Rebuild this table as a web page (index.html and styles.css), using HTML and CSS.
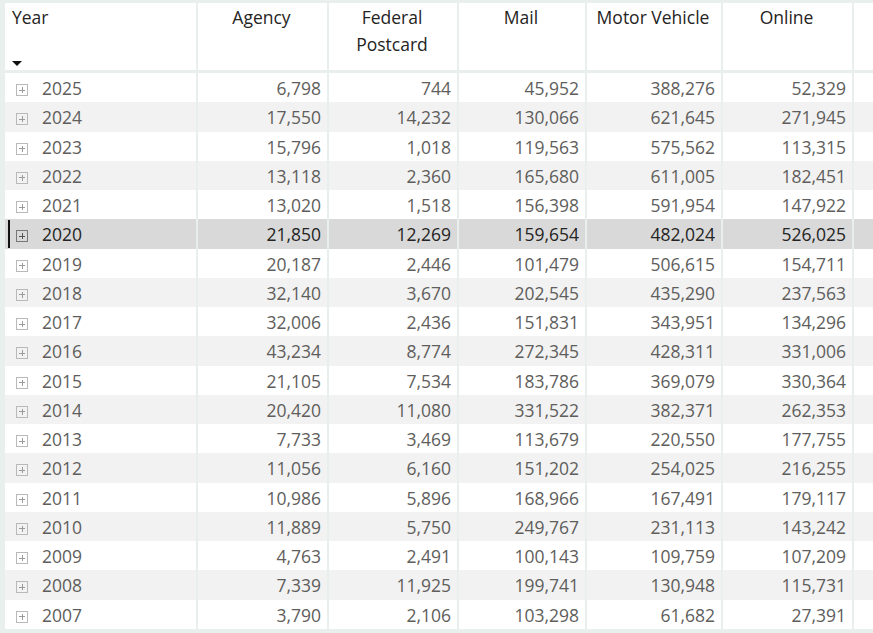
FILE: index.html
```html
<!DOCTYPE html>
<html>
<head>
<meta charset="utf-8">
<link rel="stylesheet" href="styles.css">
</head>
<body>
<div class="frame">
<table class="matrix">
<colgroup>
<col class="c-year"><col class="c-agency"><col class="c-fed"><col class="c-mail"><col class="c-motor"><col class="c-online"><col class="c-rest">
</colgroup>
<thead>
<tr>
<th class="h-year"><div class="h-year-inner"><span>Year</span><span class="sort"></span></div></th>
<th>Agency</th>
<th>Federal<br>Postcard</th>
<th>Mail</th>
<th>Motor Vehicle</th>
<th>Online</th>
<th class="rest"></th>
</tr>
</thead>
<tbody>
<tr><td class="year"><span class="exp"></span>2025</td><td>6,798</td><td>744</td><td>45,952</td><td>388,276</td><td>52,329</td><td class="rest"></td></tr>
<tr><td class="year"><span class="exp"></span>2024</td><td>17,550</td><td>14,232</td><td>130,066</td><td>621,645</td><td>271,945</td><td class="rest"></td></tr>
<tr><td class="year"><span class="exp"></span>2023</td><td>15,796</td><td>1,018</td><td>119,563</td><td>575,562</td><td>113,315</td><td class="rest"></td></tr>
<tr><td class="year"><span class="exp"></span>2022</td><td>13,118</td><td>2,360</td><td>165,680</td><td>611,005</td><td>182,451</td><td class="rest"></td></tr>
<tr><td class="year"><span class="exp"></span>2021</td><td>13,020</td><td>1,518</td><td>156,398</td><td>591,954</td><td>147,922</td><td class="rest"></td></tr>
<tr class="sel"><td class="year"><span class="bar"></span><span class="exp"></span>2020</td><td>21,850</td><td>12,269</td><td>159,654</td><td>482,024</td><td>526,025</td><td class="rest"></td></tr>
<tr><td class="year"><span class="exp"></span>2019</td><td>20,187</td><td>2,446</td><td>101,479</td><td>506,615</td><td>154,711</td><td class="rest"></td></tr>
<tr><td class="year"><span class="exp"></span>2018</td><td>32,140</td><td>3,670</td><td>202,545</td><td>435,290</td><td>237,563</td><td class="rest"></td></tr>
<tr><td class="year"><span class="exp"></span>2017</td><td>32,006</td><td>2,436</td><td>151,831</td><td>343,951</td><td>134,296</td><td class="rest"></td></tr>
<tr><td class="year"><span class="exp"></span>2016</td><td>43,234</td><td>8,774</td><td>272,345</td><td>428,311</td><td>331,006</td><td class="rest"></td></tr>
<tr><td class="year"><span class="exp"></span>2015</td><td>21,105</td><td>7,534</td><td>183,786</td><td>369,079</td><td>330,364</td><td class="rest"></td></tr>
<tr><td class="year"><span class="exp"></span>2014</td><td>20,420</td><td>11,080</td><td>331,522</td><td>382,371</td><td>262,353</td><td class="rest"></td></tr>
<tr><td class="year"><span class="exp"></span>2013</td><td>7,733</td><td>3,469</td><td>113,679</td><td>220,550</td><td>177,755</td><td class="rest"></td></tr>
<tr><td class="year"><span class="exp"></span>2012</td><td>11,056</td><td>6,160</td><td>151,202</td><td>254,025</td><td>216,255</td><td class="rest"></td></tr>
<tr><td class="year"><span class="exp"></span>2011</td><td>10,986</td><td>5,896</td><td>168,966</td><td>167,491</td><td>179,117</td><td class="rest"></td></tr>
<tr><td class="year"><span class="exp"></span>2010</td><td>11,889</td><td>5,750</td><td>249,767</td><td>231,113</td><td>143,242</td><td class="rest"></td></tr>
<tr><td class="year"><span class="exp"></span>2009</td><td>4,763</td><td>2,491</td><td>100,143</td><td>109,759</td><td>107,209</td><td class="rest"></td></tr>
<tr><td class="year"><span class="exp"></span>2008</td><td>7,339</td><td>11,925</td><td>199,741</td><td>130,948</td><td>115,731</td><td class="rest"></td></tr>
<tr><td class="year"><span class="exp"></span>2007</td><td>3,790</td><td>2,106</td><td>103,298</td><td>61,682</td><td>27,391</td><td class="rest"></td></tr>
</tbody>
</table>
</div>
</body>
</html>
```
FILE: styles.css
```css
html, body {
  margin: 0;
  padding: 0;
  background: #e9efec;
  overflow: hidden;
}
.frame {
  padding: 3px 0 0 5px;
  width: 868px;
  overflow: hidden;
}
.matrix {
  border-collapse: separate;
  border-spacing: 0;
  table-layout: fixed;
  width: 868px;
  font-family: "Open Sans", "Noto Sans", sans-serif;
  font-size: 17.5px;
  color: #605e5c;
  background: #fff;
}
.c-year { width: 193px; }
.c-agency { width: 131px; }
.c-fed { width: 130px; }
.c-mail { width: 128px; }
.c-motor { width: 136px; }
.c-online { width: 131px; }
.c-rest { width: 19px; }
.matrix th, .matrix td {
  border-right: 2px solid #e9efec;
  padding: 0 6px 0 0;
  white-space: nowrap;
  overflow: hidden;
}
.matrix th.rest, .matrix td.rest {
  border-right: 0;
  padding: 0;
}
.matrix th {
  height: 66px;
  border-bottom: 3px solid #e9efec;
  vertical-align: top;
  font-weight: normal;
  color: #252423;
  text-align: center;
  line-height: 27px;
  padding: 1px 2px 0 0;
  box-sizing: content-box;
}
.matrix th.h-year {
  text-align: left;
  padding: 1px 0 0 7px;
}
.h-year-inner {
  display: flex;
  flex-direction: column;
  height: 66px;
  justify-content: space-between;
  box-sizing: border-box;
}
.sort {
  width: 0;
  height: 0;
  border-left: 5px solid transparent;
  border-right: 5px solid transparent;
  border-top: 5px solid #111;
  margin: 0 0 4px 0;
}
.matrix td {
  height: 29.25px;
  line-height: 20px;
  text-align: right;
  padding-top: 1px;
  padding-bottom: 0;
  box-sizing: border-box;
}
.matrix tbody tr:nth-child(even) td { background: #f2f2f2; }
.matrix tbody tr.sel td { background: #d9d9d9; color: #252423; }
.matrix td.year {
  text-align: left;
  padding-left: 11px;
  position: relative;
}
.exp {
  display: inline-block;
  width: 12px;
  height: 12px;
  border: 1px solid #b9b9b9;
  box-sizing: border-box;
  margin-right: 14px;
  vertical-align: -1px;
  position: relative;
}
.exp::before, .exp::after {
  content: "";
  position: absolute;
  background: #9a9a9a;
}
.exp::before { left: 2px; right: 2px; top: 4.5px; height: 1px; }
.exp::after { top: 2px; bottom: 2px; left: 4.5px; width: 1px; }
.sel .exp { border-color: #777; }
.sel .exp::before, .sel .exp::after { background: #555; }
.bar {
  position: absolute;
  left: 3px;
  top: 1px;
  bottom: 1px;
  width: 2px;
  background: #111;
}
```
